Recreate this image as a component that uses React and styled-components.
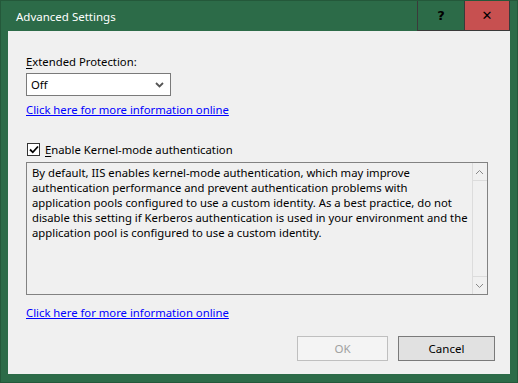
import styled, { createGlobalStyle } from "styled-components";

const Global = createGlobalStyle`
  html, body { margin: 0; padding: 0; background: #2c6b48; }
  body { font-family: "Noto Sans", "Open Sans", sans-serif; font-size: 11.3px; }
  * { box-sizing: border-box; }
`;

const Window = styled.div`
  width: 518px; height: 383px;
  background: #2c6b48;
  border: 1px solid #24583a;
  display: flex; flex-direction: column;
`;

const TitleBar = styled.div`
  height: 30px;
  display: flex; align-items: stretch;
  color: #fff;
`;

const Title = styled.div`
  flex: 1;
  display: flex; align-items: center;
  padding-left: 15px;
  font-size: 11.5px;
`;

const Caption = styled.div`
  display: flex;
  margin-right: 7px;
  border: 1px solid #3a3a3a;
  border-top: none;
`;

const CapButton = styled.div`
  width: ${p => p.$w}px;
  display: grid; place-items: center;
  background: ${p => p.$bg};
  border-left: ${p => p.$sep ? "1px solid #3a3a3a" : "none"};
  color: #000;
  font-weight: 700;
  font-size: 13px;
  font-family: "DejaVu Sans", sans-serif;
`;

const Client = styled.div`
  flex: 1;
  margin: 0 7px 8px 7px;
  background: #f0f0f0;
  padding: 23px 15px 13px 18px;
  display: flex; flex-direction: column;
  color: #000;
`;

const Label = styled.div`
  line-height: 15px;
  u { text-decoration: underline; text-underline-offset: 2px; }
`;

const Select = styled.div`
  margin-top: 4px;
  width: 145px; height: 23px;
  background: #fff;
  border: 1px solid #7a7a7a;
  display: flex; align-items: center; justify-content: space-between;
  padding: 0 6px 0 4px;
`;

const Link = styled.a`
  margin-top: ${p => p.$top}px;
  line-height: 15px;
  color: #0000ff;
  text-decoration: underline;
  text-underline-offset: 1px;
  align-self: flex-start;
`;

const CheckRow = styled.label`
  margin-top: 25px;
  display: flex; align-items: center; gap: 5px;
  line-height: 15px;
  padding-left: 1px;
  u { text-decoration: underline; text-underline-offset: 2px; }
`;

const Box = styled.span`
  width: 13px; height: 13px;
  background: #fff;
  border: 1px solid #333;
  display: grid; place-items: center;
`;

const TextArea = styled.div`
  margin-top: 5px;
  width: 462px; height: 133px;
  border: 1px solid #828282;
  background: #f0f0f0;
  display: flex;
`;

const Text = styled.div`
  flex: 1;
  padding: 2px 4px 0 5px;
  line-height: 15px;
  white-space: nowrap;
`;

const Scroll = styled.div`
  width: 18px;
  border-left: 1px solid #dcdcdc;
  display: flex; flex-direction: column; justify-content: space-between;
  background: #f0f0f0;
`;

const Arrow = styled.div`
  height: 18px;
  display: grid; place-items: center;
  border-top: ${p => p.$down ? "1px solid #dcdcdc" : "none"};
  border-bottom: ${p => p.$down ? "none" : "1px solid #dcdcdc"};
`;

const Footer = styled.div`
  margin-top: auto;
  display: flex; justify-content: flex-end; gap: 10px;
`;

const Button = styled.button`
  width: ${p => p.$w}px; height: 25px;
  font: inherit;
  font-size: 11.5px;
  background: ${p => p.disabled ? "#f4f4f4" : "#e1e1e1"};
  border: 1px solid ${p => p.disabled ? "#bfbfbf" : "#7a7a7a"};
  color: ${p => p.disabled ? "#a0a0a0" : "#000"};
  padding: 0;
`;

const Chevron = ({ up, color = "#888", bold }) => (
  <svg width="9" height="6" viewBox="0 0 9 6">
    <path d={up ? "M1 5 L4.5 1.5 L8 5" : "M1 1 L4.5 4.5 L8 1"} fill="none" stroke={color} strokeWidth={bold ? 1.8 : 1} />
  </svg>
);

export default function App() {
  return (
    <>
      <Global />
      <Window>
        <TitleBar>
          <Title>Advanced Settings</Title>
          <Caption>
            <CapButton $w={46} $bg="#2c6b48">?</CapButton>
            <CapButton $w={45} $bg="#c75050" $sep>✕</CapButton>
          </Caption>
        </TitleBar>
        <Client>
          <Label><u>E</u>xtended Protection:</Label>
          <Select>
            <span>Off</span>
            <Chevron color="#555" bold />
          </Select>
          <Link href="#" $top={6}>Click here for more information online</Link>
          <CheckRow>
            <Box>
              <svg width="10" height="9" viewBox="0 0 10 9">
                <path d="M1 4.5 L3.8 7.3 L9 1.5" fill="none" stroke="#000" strokeWidth="1.8" />
              </svg>
            </Box>
            <span><u>E</u>nable Kernel-mode authentication</span>
          </CheckRow>
          <TextArea>
            <Text>
              By default, IIS enables kernel-mode authentication, which may improve<br />
              authentication performance and prevent authentication problems with<br />
              application pools configured to use a custom identity. As a best practice, do not<br />
              disable this setting if Kerberos authentication is used in your environment and the<br />
              application pool is configured to use a custom identity.
            </Text>
            <Scroll>
              <Arrow><Chevron up /></Arrow>
              <Arrow $down><Chevron /></Arrow>
            </Scroll>
          </TextArea>
          <Link href="#" $top={10}>Click here for more information online</Link>
          <Footer>
            <Button $w={91} disabled>OK</Button>
            <Button $w={97}>Cancel</Button>
          </Footer>
        </Client>
      </Window>
    </>
  );
}
